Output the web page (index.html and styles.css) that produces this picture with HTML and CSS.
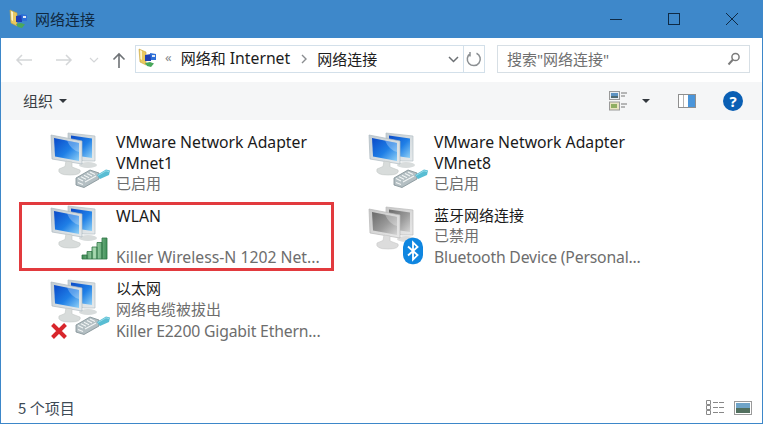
FILE: index.html
```html
<!DOCTYPE html>
<html lang="zh">
<head>
<meta charset="utf-8">
<title>网络连接</title>
<link rel="stylesheet" href="styles.css">
</head>
<body>
<svg class="defs" width="0" height="0" aria-hidden="true">
  <defs>
    <linearGradient id="scr" x1="0" y1="0" x2="1" y2="1">
      <stop offset="0" stop-color="#0a49c8"/><stop offset=".55" stop-color="#1f7fe6"/><stop offset="1" stop-color="#8fd0f6"/>
    </linearGradient>
    <linearGradient id="gscr" x1="0" y1="0" x2="1" y2="1">
      <stop offset="0" stop-color="#6a6a6a"/><stop offset=".55" stop-color="#9a9a9a"/><stop offset="1" stop-color="#d4d4d4"/>
    </linearGradient>
    <linearGradient id="frm" x1="0" y1="0" x2="1" y2="1">
      <stop offset="0" stop-color="#c2ccd2"/><stop offset="1" stop-color="#e6eaec"/>
    </linearGradient>
    <linearGradient id="gfrm" x1="0" y1="0" x2="1" y2="1">
      <stop offset="0" stop-color="#c8c8c8"/><stop offset="1" stop-color="#e8e8e8"/>
    </linearGradient>
    <linearGradient id="grn" x1="0" y1="0" x2="1" y2="0">
      <stop offset="0" stop-color="#3b8a52"/><stop offset=".5" stop-color="#a8d8b0"/><stop offset="1" stop-color="#3f8f58"/>
    </linearGradient>
    <symbol id="pc" viewBox="0 0 70 60">
      <path d="M23 5 L50 8 L50 33 L39 33 L23 29Z" fill="url(#frm)" stroke="#b5c0c6" stroke-width=".7"/>
      <path d="M26 7.500 L47 10.500 L47 30 L37 28.500 L26 26Z" fill="url(#scr)"/>
      <ellipse cx="43" cy="37" rx="9" ry="3" fill="#d8dcdc"/>
      <path d="M6 7 L37 13 L37 36 L7 31Z" fill="url(#frm)" stroke="#aeb9c0" stroke-width=".7"/>
      <path d="M9 10 L34 15 L34 33 L10 28.500Z" fill="url(#scr)"/>
      <path d="M22 12.500 L34 15 L34 24 Q26 22 22 12.500Z" fill="#fff" opacity=".28"/>
      <path d="M21 33 L27 34 L27 39 L35 42 Q37 47 25 47 Q12 47 14 41 L20 38.500Z" fill="#d8dcdb" stroke="#c2c7c6" stroke-width=".6"/>
    </symbol>
    <symbol id="pcg" viewBox="0 0 70 60">
      <path d="M23 5 L50 8 L50 33 L39 33 L23 29Z" fill="url(#gfrm)" stroke="#bcbcbc" stroke-width=".7"/>
      <path d="M26 7.500 L47 10.500 L47 30 L37 28.500 L26 26Z" fill="url(#gscr)"/>
      <ellipse cx="43" cy="37" rx="9" ry="3" fill="#dcdcdc"/>
      <path d="M6 7 L37 13 L37 36 L7 31Z" fill="url(#gfrm)" stroke="#b8b8b8" stroke-width=".7"/>
      <path d="M9 10 L34 15 L34 33 L10 28.500Z" fill="url(#gscr)"/>
      <path d="M22 12.500 L34 15 L34 24 Q26 22 22 12.500Z" fill="#fff" opacity=".28"/>
      <path d="M21 33 L27 34 L27 39 L35 42 Q37 47 25 47 Q12 47 14 41 L20 38.500Z" fill="#dcdcdc" stroke="#c8c8c8" stroke-width=".6"/>
    </symbol>
    <symbol id="plug" viewBox="0 0 36 20">
      <path d="M1 10 L15 2 L24 5 L24 11 L9 19.500 L1 17Z" fill="#b4bfc3" stroke="#7f8e93" stroke-width=".8"/>
      <path d="M3 10.500 L8 13 M6 8.800 L11 11.300 M9 7.200 L14 9.700 M12 5.600 L17 8.100 M15 4 L20 6.500 M3 14.500 L8 16.500 M10 14 L21 8" stroke="#f2f5f5" stroke-width="1.100"/>
      <path d="M22 7 L31 1.500 L35 2.500 L34 7 L25 11Z" fill="#58bdd3"/>
      <path d="M23 7.500 L31 2.800 L34 3.600" fill="none" stroke="#a6e2ee" stroke-width=".8"/>
    </symbol>
    <symbol id="bars" viewBox="0 0 27 23">
      <path d="M1 18h5v4H1zM6 14.500h5V22H6zM11 10h5v12h-5zM16 5.500h5V22h-5zM21 1h5v21h-5z" fill="url(#grn)" stroke="#2f7445" stroke-width=".8"/>
    </symbol>
    <symbol id="tiny" viewBox="0 0 20 20">
      <path d="M1 1 L2 14 L8 17 L8 4Z" fill="#e8c860" stroke="#c9a43c" stroke-width=".6"/>
      <path d="M2 2 L4 3 L4 12 L2.500 11Z" fill="#fbf3cf"/>
      <path d="M7 7 L13 6 L13 13 L7 13Z" fill="#1f3fb4"/>
      <path d="M12 5 L18 6 L18 12 L13 12Z" fill="#2d6fd8"/>
      <path d="M14 7h3v2h-3z" fill="#dfe8f4"/>
      <path d="M7 15 L12 14 L16 15.500 L13 19 L9 18Z" fill="#4aa85c"/>
    </symbol>
  </defs>
</svg>
<div class="window">
  <header class="titlebar">
    <svg class="tb-icon" width="20" height="20"><use href="#tiny"/></svg>
    <span class="tb-title">网络连接</span>
    <div class="controls">
      <svg class="ctl" width="14" height="14" viewBox="0 0 14 14"><path d="M1 7.500h12" stroke="#0f2a44" stroke-width="1"/></svg>
      <svg class="ctl" width="14" height="14" viewBox="0 0 14 14"><rect x="1.500" y="1.500" width="11" height="11" fill="none" stroke="#0f2a44"/></svg>
      <svg class="ctl" width="14" height="14" viewBox="0 0 14 14"><path d="M1 1l12 12M13 1L1 13" stroke="#0f2a44"/></svg>
    </div>
  </header>
  <nav class="navbar">
    <svg class="nav-ic back" width="18" height="14" viewBox="0 0 18 14"><path d="M17 7H2M7 2L2 7l5 5" fill="none" stroke="#d4d6d8" stroke-width="1.500"/></svg>
    <svg class="nav-ic fwd" width="18" height="14" viewBox="0 0 18 14"><path d="M1 7h15M11 2l5 5-5 5" fill="none" stroke="#d4d6d8" stroke-width="1.500"/></svg>
    <svg class="nav-ic down" width="10" height="6" viewBox="0 0 10 6"><path d="M1 1l4 4 4-4" fill="none" stroke="#d4d6d8" stroke-width="1.200"/></svg>
    <svg class="nav-ic up" width="14" height="16" viewBox="0 0 14 16"><path d="M7 16V2M1.500 7.500L7 2l5.500 5.500" fill="none" stroke="#6e7276" stroke-width="1.600"/></svg>
    <div class="address">
      <svg class="addr-icon" width="20" height="20"><use href="#tiny"/></svg>
      <span class="chev">«</span>
      <span class="crumb first"><span class="cjk">网络和</span> Internet</span>
      <svg class="sep" width="6" height="10" viewBox="0 0 6 10"><path d="M1 1l4 4-4 4" fill="none" stroke="#8a8d90" stroke-width="1.400"/></svg>
      <span class="crumb cjk">网络连接</span>
      <svg class="addr-drop" width="11" height="7" viewBox="0 0 11 7"><path d="M1 1l4.500 4.500L10 1" fill="none" stroke="#6c7074" stroke-width="1.500"/></svg>
      <span class="refresh">
        <svg width="16" height="16" viewBox="0 0 16 16"><path d="M10.500 2.200A6.500 6.500 0 1 1 4.500 2.500M4 1v4.500" fill="none" stroke="#8b8f92" stroke-width="1.500"/></svg>
      </span>
    </div>
    <div class="search">
      <span class="search-text">搜索"网络连接"</span>
      <svg width="14" height="14" viewBox="0 0 14 14"><circle cx="8.500" cy="5" r="3.600" fill="none" stroke="#7b7b7b" stroke-width="1.500"/><path d="M6 7.500L1.500 12.500" stroke="#7b7b7b" stroke-width="2"/></svg>
    </div>
  </nav>
  <div class="toolbar">
    <span class="org">组织</span>
    <span class="caret"></span>
    <div class="tools">
      <svg class="views" width="18" height="20" viewBox="0 0 18 20">
        <rect x=".5" y=".5" width="10" height="8" fill="#e8eef3" stroke="#9a9a9a"/>
        <rect x="2" y="2" width="7" height="3" fill="#5d93c2"/>
        <rect x="2" y="5" width="7" height="2" fill="#4f6a72"/>
        <rect x=".5" y="11" width="10" height="8" fill="#e9e4c0" stroke="#9a9a9a"/>
        <rect x="2" y="13" width="6" height="4" fill="#8fae62"/>
        <path d="M12 2h6M12 5h4M12 13h6M12 16h4" stroke="#777"/>
      </svg>
      <span class="caret small"></span>
      <svg class="pane" width="18" height="14" viewBox="0 0 18 14">
        <rect x=".5" y=".5" width="17" height="13" fill="#fff" stroke="#8f8f8f"/>
        <path d="M5.500 1v12" stroke="#b4b4b4"/>
        <rect x="10" y="1" width="7" height="12" fill="#4a95da"/>
      </svg>
      <span class="help">?</span>
    </div>
  </div>
  <main class="content">
    <div class="grid">
      <article class="item">
        <div class="ico"><svg class="pc" width="70" height="60"><use href="#pc"/></svg><svg class="badge plug" width="36" height="20"><use href="#plug"/></svg></div>
        <div class="txt"><div class="name lat">VMware Network Adapter</div><div class="name lat">VMnet1</div><div class="sub cjk">已启用</div></div>
      </article>
      <article class="item">
        <div class="ico"><svg class="pc" width="70" height="60"><use href="#pc"/></svg><svg class="badge plug" width="36" height="20"><use href="#plug"/></svg></div>
        <div class="txt"><div class="name lat">VMware Network Adapter</div><div class="name lat">VMnet8</div><div class="sub cjk">已启用</div></div>
      </article>
      <article class="item marked">
        <div class="ico"><svg class="pc" width="70" height="60"><use href="#pc"/></svg><svg class="badge bars" width="27" height="23"><use href="#bars"/></svg></div>
        <div class="txt"><div class="name lat">WLAN</div><div class="sub">&nbsp;</div><div class="sub lat">Killer Wireless-N 1202 Net...</div></div>
      </article>
      <article class="item">
        <div class="ico"><svg class="pc" width="70" height="60"><use href="#pcg"/></svg>
          <svg class="badge bt" width="20" height="28" viewBox="0 0 22 29"><rect width="22" height="29" rx="10" fill="#0f86e0"/><path d="M5.500 9.500L16 19l-5 5V5l5 5L5.500 19.500" fill="none" stroke="#fff" stroke-width="2"/></svg></div>
        <div class="txt"><div class="name cjk">蓝牙网络连接</div><div class="sub cjk">已禁用</div><div class="sub lat narrow">Bluetooth Device (Personal...</div></div>
      </article>
      <article class="item">
        <div class="ico"><svg class="pc" width="70" height="60"><use href="#pc"/></svg><svg class="badge plug" width="36" height="20"><use href="#plug"/></svg>
          <svg class="badge cross" width="18" height="18" viewBox="0 0 18 18"><path d="M2.500 2.500l13 13M15.500 2.500l-13 13" stroke="#d8262c" stroke-width="4"/></svg></div>
        <div class="txt"><div class="name cjk">以太网</div><div class="sub cjk">网络电缆被拔出</div><div class="sub lat tight">Killer E2200 Gigabit Ethern...</div></div>
      </article>
    </div>
  </main>
  <footer class="status">
    <span class="count">5 个项目</span>
    <div class="status-views">
      <svg width="18" height="15" viewBox="0 0 18 15"><path d="M.5.500h4v4h-4zM.5 5.500h4v4h-4zM.5 10.500h4v4h-4z" fill="#fff" stroke="#8a8a8a"/><path d="M7 2.500h11M7 7.500h11M7 12.500h11" stroke="#888" stroke-dasharray="5 1"/></svg>
      <svg width="18" height="14" viewBox="0 0 18 14"><rect x=".5" y=".5" width="17" height="13" fill="#fff" stroke="#9a9a9a"/><rect x="2" y="2" width="14" height="5" fill="#6fa4c8"/><rect x="2" y="7" width="14" height="5" fill="#52705f"/></svg>
    </div>
  </footer>
</div>
</body>
</html>
```
FILE: styles.css
```css
* { box-sizing: border-box; }
html, body { margin: 0; padding: 0; }
body { width: 763px; height: 424px; overflow: hidden; background: #fff; font-family: "Noto Sans", "Noto Sans CJK SC", sans-serif; }
.defs { position: absolute; }
.window { width: 763px; height: 424px; display: flex; flex-direction: column; border: 1px solid #3d87c9; border-top: 0; }
.cjk { font-size: 15px; font-family: "Noto Sans CJK SC", sans-serif; }
.titlebar { height: 38px; flex: none; margin: 0 -1px; background: #3e88ca; display: flex; align-items: center; padding-left: 9px; }
.tb-icon { margin-top: -1px; }
.tb-title { margin-left: 6px; font-size: 15px; color: #10283f; margin-top: -1px; font-family: "Noto Sans CJK SC", sans-serif; }
.controls { margin-left: auto; display: flex; gap: 44px; padding-right: 24px; margin-top: -1px; }
.ctl { display: block; }
.navbar { height: 44px; flex: none; display: flex; align-items: center; padding: 0 0 0 14px; background: #fff; }
.nav-ic { flex: none; }
.fwd { margin-left: 22px; }
.down { margin-left: 16px; }
.up { margin-left: 13px; }
.address { margin-left: 9px; width: 350px; height: 28px; margin-top: -2px; border: 1px solid #d3e0ea; display: flex; align-items: center; padding-left: 2px; font-size: 15.750px; color: #1c1c1c; }
.addr-icon { margin-top: -3px; flex: none; }
.chev { margin-left: 7px; color: #85898c; font-size: 13px; margin-top: -4px; }
.crumb { margin-left: 0; padding-bottom: 2px; }
.crumb.first { margin-left: 9px; }
.sep { margin-left: 11px; margin-right: 10px; flex: none; }
.addr-drop { margin-left: auto; margin-right: 4px; flex: none; }
.refresh { width: 21px; height: 26px; flex: none; border-left: 1px solid #d3e0ea; display: flex; align-items: center; justify-content: center; }
.search { margin-left: 12px; width: 253px; height: 28px; margin-top: -2px; border: 1px solid #d7dfe5; display: flex; align-items: center; justify-content: space-between; padding: 0 8px 0 9px; font-size: 15px; color: #6f6f6f; }
.search-text { padding-bottom: 2px; }
.toolbar { height: 38px; flex: none; background: #f5f6f7; display: flex; align-items: center; padding-left: 22px; }
.org { font-size: 15px; color: #3a3f45; font-family: "Noto Sans CJK SC", sans-serif; padding-bottom: 2px; }
.caret { width: 0; height: 0; margin-left: 6px; border-left: 4px solid transparent; border-right: 4px solid transparent; border-top: 4px solid #33383e; }
.tools { margin-left: auto; display: flex; align-items: center; padding-right: 19px; }
.caret.small { margin-left: 15px; }
.pane { margin-left: 28px; }
.help { margin-left: 27px; width: 20px; height: 20px; border-radius: 50%; background: #0a5fb4; color: #fff; font-size: 15px; font-weight: 700; display: flex; align-items: center; justify-content: center; }
.content { flex: 1; min-height: 0; background: #fff; padding: 11px 0 0 18px; }
.grid { display: grid; grid-template-columns: 318px 314px; grid-auto-rows: 73.500px; }
.item { display: flex; height: 66px; align-items: flex-start; }
.item.marked { border: 3px solid #e23a3e; margin-top: -2.500px; height: 69px; width: 315px; }
.ico { width: 97px; height: 66px; flex: none; position: relative; }
.pc { position: absolute; left: 26px; top: -3px; }
.badge { position: absolute; }
.plug { left: 56px; top: 37px; }
.bars { left: 62px; top: 33px; }
.bt { left: 66px; top: 32px; }
.cross { left: 31px; top: 44px; }
.marked .ico { margin-left: -3px; margin-top: -1px; }
.txt { font-size: 15.750px; line-height: 20.500px; white-space: nowrap; }
.lat { padding-top: 1px; margin-bottom: -1px; }
.lat + .cjk { margin-top: 1px; }
.narrow { letter-spacing: -.18px; }
.tight { padding-top: 2px; letter-spacing: -.18px; }
.name { color: #1a1a1a; }
.sub { color: #6d6d6d; }
.status { height: 31px; flex: none; display: flex; align-items: center; padding-left: 17px; font-size: 15px; color: #3d4a55; margin-top: auto; }
.count { font-family: "Noto Sans CJK SC", sans-serif; }
.status-views { margin-left: auto; display: flex; align-items: center; gap: 10px; padding-right: 10px; }
```
